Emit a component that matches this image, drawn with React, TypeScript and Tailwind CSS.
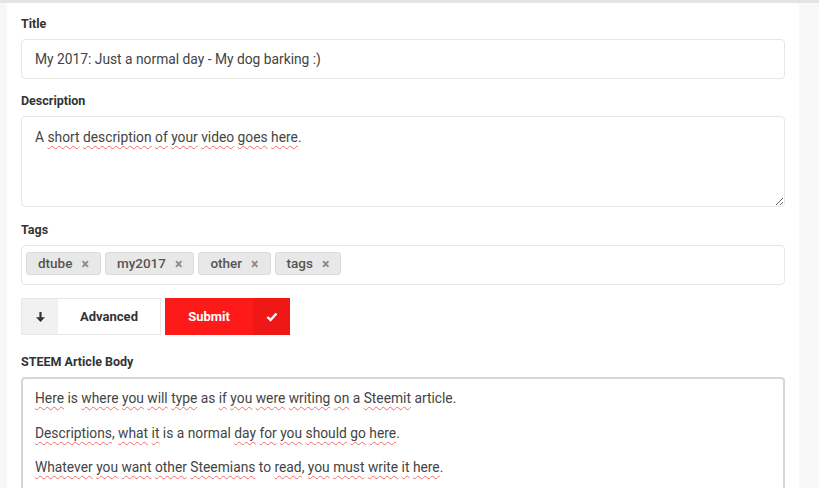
import React from 'react';

const tags = ['dtube', 'my2017', 'other', 'tags'];

function Squiggle({ children }: { children: React.ReactNode }) {
  return (
    <span className="underline decoration-wavy decoration-[#f26b6b] decoration-1 underline-offset-[3px]">
      {children}
    </span>
  );
}

function Label({ children }: { children: React.ReactNode }) {
  return <div className="text-[12.5px] leading-[16px] font-bold text-[#333] mb-[7px]">{children}</div>;
}

export default function App() {
  return (
    <div
      className="w-[819px] h-[488px] overflow-hidden bg-white border-t-[3px] border-[#e4e4e4] flex"
      style={{ fontFamily: 'Roboto, "Liberation Sans", sans-serif' }}
    >
      <div className="w-[7px] bg-[#f7f7f7] shrink-0" />
      <div className="w-[792px] shrink-0 px-[14px] pt-[13px]">
        <Label>Title</Label>
        <div className="h-[40px] border border-[#e6e6e6] rounded-[4px] px-[13px] flex items-center text-[13.8px] text-[#444]">
          My 2017: Just a normal day - My dog barking :)
        </div>

        <div className="mt-[14px]">
          <Label>Description</Label>
          <div className="h-[91px] border border-[#e6e6e6] rounded-[4px] px-[13px] pt-[10px] text-[13.8px] text-[#444] resize-y overflow-auto">
            A <Squiggle>short</Squiggle> <Squiggle>description</Squiggle> <Squiggle>of</Squiggle>{' '}
            <Squiggle>your</Squiggle> <Squiggle>video</Squiggle> <Squiggle>goes</Squiggle>{' '}
            <Squiggle>here</Squiggle>.
          </div>
        </div>

        <div className="mt-[15px]">
          <Label>Tags</Label>
          <div className="h-[40px] border border-[#e6e6e6] rounded-[4px] px-[4px] pt-[6px] flex items-start gap-[4px]">
            {tags.map((t) => (
              <span
                key={t}
                className="h-[23px] px-[11px] flex items-center gap-[9px] bg-[#e8e8e8] border border-[#dcdcdc] rounded-[3px] text-[13.5px] font-medium text-[#555]"
              >
                {t}
                <span className="text-[#888] text-[14px] font-bold leading-none">×</span>
              </span>
            ))}
          </div>
        </div>

        <div className="mt-[13px] flex gap-[4px] h-[37px]">
          <div className="w-[140px] flex border border-[#e8e8e8]">
            <div className="w-[36px] bg-[#f1f1f1] flex items-center justify-center">
              <svg width="11" height="12" viewBox="0 0 11 12">
                <path d="M5.5 1v7" stroke="#333" strokeWidth="2.2" fill="none" />
                <path d="M1 6.2l4.5 4.8 4.5-4.8z" fill="#333" />
              </svg>
            </div>
            <div className="flex-1 flex items-center justify-center text-[13px] font-bold text-[#333]">Advanced</div>
          </div>
          <div className="w-[125px] flex bg-[#ff1a1a]">
            <div className="flex-1 flex items-center justify-center text-[13px] font-bold text-white">Submit</div>
            <div className="w-[37px] bg-[#f01717] flex items-center justify-center">
              <svg width="12" height="10" viewBox="0 0 12 10">
                <path d="M1.5 5l3 3 6-6.5" stroke="#fff" strokeWidth="2.4" fill="none" />
              </svg>
            </div>
          </div>
        </div>

        <div className="mt-[19px]">
          <Label>STEEM Article Body</Label>
          <div className="h-[200px] border-2 border-[#d6d6d6] rounded-[4px] px-[12px] pt-[9px] text-[13.8px] leading-[20px] text-[#444]">
            <p className="mb-[14.5px]">
              <Squiggle>Here</Squiggle> is <Squiggle>where</Squiggle> <Squiggle>you</Squiggle>{' '}
              <Squiggle>will</Squiggle> <Squiggle>type</Squiggle> as <Squiggle>if</Squiggle>{' '}
              <Squiggle>you</Squiggle> <Squiggle>were</Squiggle> <Squiggle>writing</Squiggle>{' '}
              <Squiggle>on</Squiggle> a <Squiggle>Steemit</Squiggle> article.
            </p>
            <p className="mb-[14.5px]">
              <Squiggle>Descriptions</Squiggle>, <Squiggle>what</Squiggle> <Squiggle>it</Squiggle> is a normal{' '}
              <Squiggle>day</Squiggle> <Squiggle>for</Squiggle> <Squiggle>you</Squiggle>{' '}
              <Squiggle>should</Squiggle> <Squiggle>go</Squiggle> <Squiggle>here</Squiggle>.
            </p>
            <p>
              <Squiggle>Whatever</Squiggle> <Squiggle>you</Squiggle> <Squiggle>want</Squiggle>{' '}
              <Squiggle>other</Squiggle> <Squiggle>Steemians</Squiggle> to <Squiggle>read</Squiggle>,{' '}
              <Squiggle>you</Squiggle> <Squiggle>must</Squiggle> <Squiggle>write</Squiggle>{' '}
              <Squiggle>it</Squiggle> <Squiggle>here</Squiggle>.
            </p>
          </div>
        </div>
      </div>
      <div className="flex-1 bg-[#f8f8f8]" />
    </div>
  );
}
